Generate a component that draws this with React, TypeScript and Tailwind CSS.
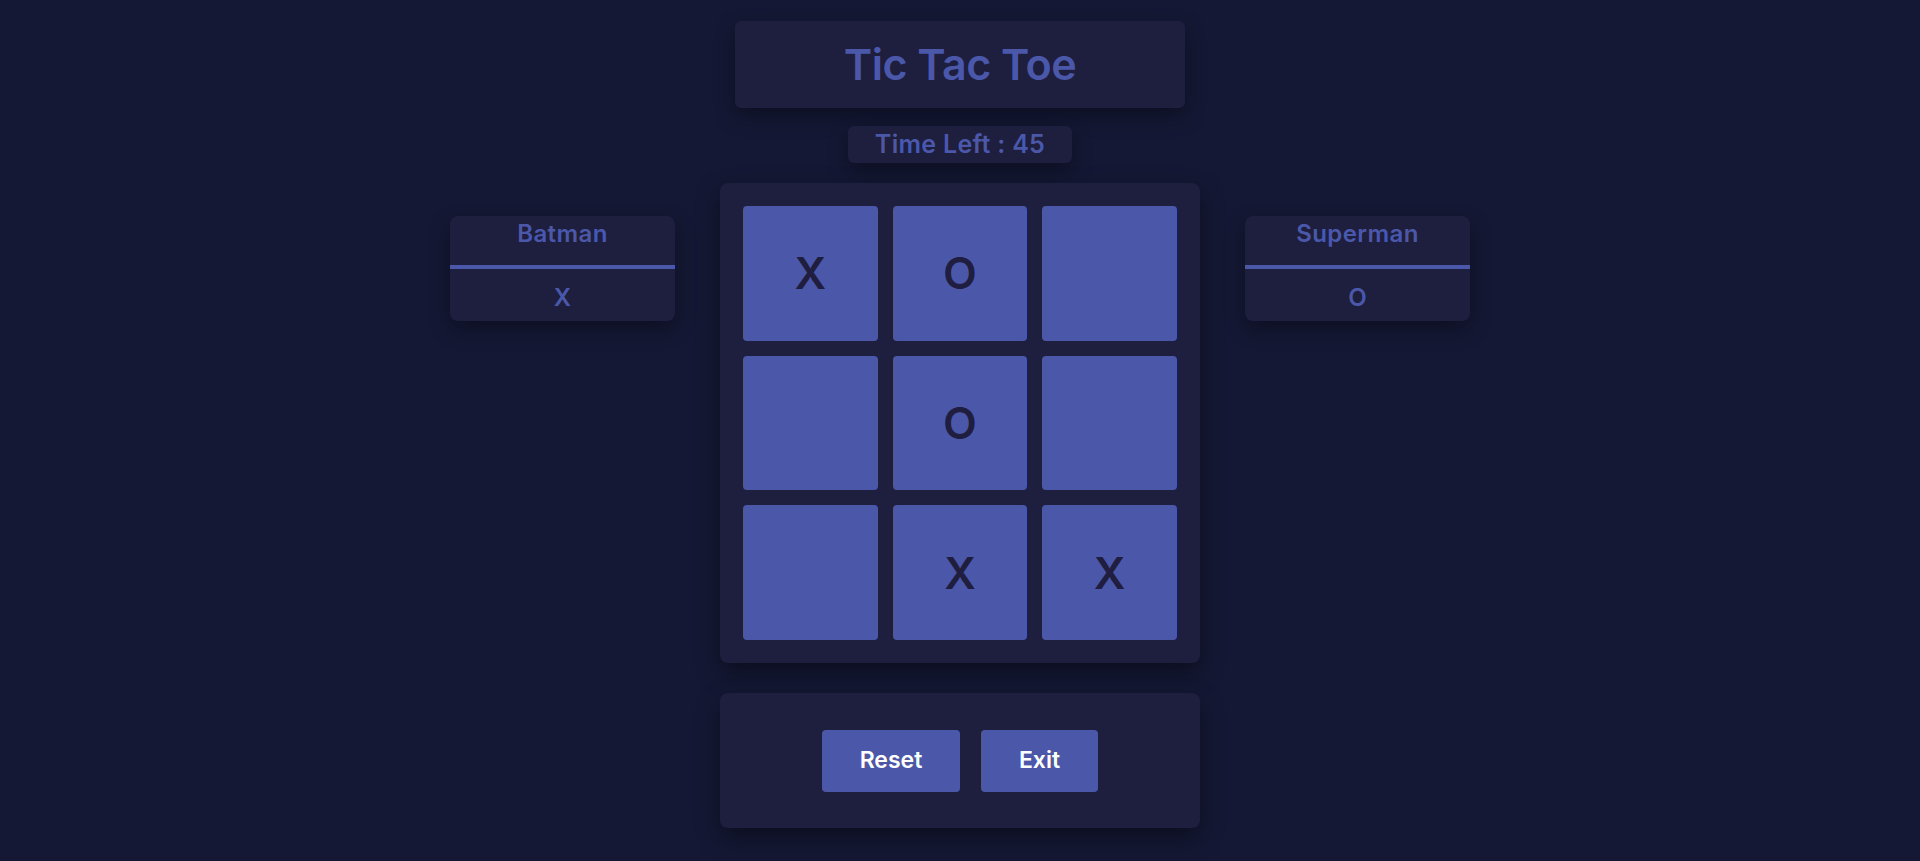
import React from "react";

const board = ["X", "O", "", "", "O", "", "", "X", "X"];

function PlayerCard({ name, mark }: { name: string; mark: string }) {
  return (
    <div className="mt-[33px] flex h-[105px] w-[225px] flex-col overflow-hidden rounded-[8px] bg-[#1e1e3e] shadow-[0_8px_20px_rgba(0,0,0,0.35)]">
      <div className="flex h-[49px] items-start justify-center pt-[2px] text-[24px] font-semibold leading-[32px] tracking-[0.4px] text-[#4b58aa]">
        {name}
      </div>
      <div className="h-[4px] w-full bg-[#4b58aa]" />
      <div className="flex flex-1 items-center justify-center pt-[6px] text-[24px] font-semibold text-[#4b58aa]">
        {mark}
      </div>
    </div>
  );
}

export default function App() {
  return (
    <div
      className="flex min-h-[861px] w-full flex-col items-center bg-[#141834] pt-[21px]"
      style={{ fontFamily: "Inter, 'Noto Sans', sans-serif" }}
    >
      <div className="flex h-[87px] w-[450px] items-center justify-center rounded-[6px] bg-[#1e1e3e] shadow-[0_8px_20px_rgba(0,0,0,0.35)]">
        <h1 className="text-[43px] font-semibold tracking-[-0.5px] text-[#4b58aa]">Tic Tac Toe</h1>
      </div>
      <div className="mt-[18px] flex h-[37px] w-[224px] items-center justify-center rounded-[6px] bg-[#1e1e3e] shadow-[0_8px_20px_rgba(0,0,0,0.35)]">
        <span className="text-[25px] font-semibold tracking-[0.3px] text-[#4b58aa]">Time Left : 45</span>
      </div>
      <div className="mt-[20px] flex items-start gap-[45px]">
        <PlayerCard name="Batman" mark="X" />
        <div className="flex flex-col">
          <div className="grid h-[480px] w-[480px] grid-cols-3 gap-[15px] rounded-[8px] bg-[#1e1e3e] p-[23px] shadow-[0_10px_25px_rgba(0,0,0,0.4)]">
            {board.map((v, i) => (
              <div
                key={i}
                className="flex items-center justify-center rounded-[4px] bg-[#4b58aa] text-[44px] font-semibold text-[#1f1e40]"
              >
                {v}
              </div>
            ))}
          </div>
          <div className="mt-[30px] flex h-[135px] w-[480px] items-center justify-center gap-[21px] rounded-[8px] bg-[#1e1e3e] shadow-[0_10px_25px_rgba(0,0,0,0.4)]">
            <button className="h-[62px] w-[138px] rounded-[4px] bg-[#4b58aa] text-[23px] font-semibold text-white">
              Reset
            </button>
            <button className="h-[62px] w-[117px] rounded-[4px] bg-[#4b58aa] text-[23px] font-semibold text-white">
              Exit
            </button>
          </div>
        </div>
        <PlayerCard name="Superman" mark="O" />
      </div>
    </div>
  );
}
